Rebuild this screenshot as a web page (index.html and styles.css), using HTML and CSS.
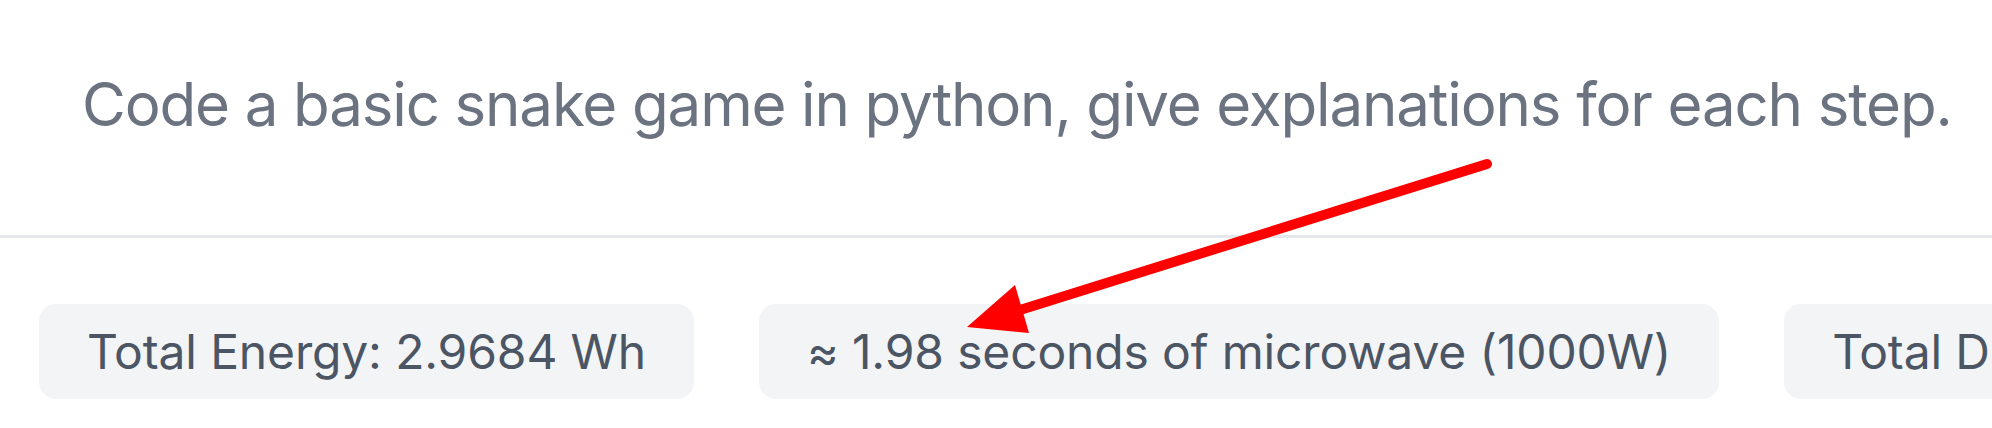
FILE: index.html
```html
<!DOCTYPE html>
<html lang="en">
<head>
<meta charset="utf-8">
<title>Prompt energy</title>
<link rel="stylesheet" href="styles.css">
</head>
<body>
<main class="page">
  <section class="prompt">
    <p class="prompt-text">Code a basic snake game in python, give explanations for each step.</p>
  </section>
  <hr class="divider">
  <section class="stats">
    <div class="badge">Total Energy: 2.9684 Wh</div>
    <div class="badge">≈ 1.98 seconds of microwave (1000W)</div>
    <div class="badge">Total Duration: 10.69 s</div>
  </section>
  <svg class="annotation" width="1992" height="428" viewBox="0 0 1992 428" aria-hidden="true">
    <line x1="1487" y1="164" x2="1020" y2="310" stroke="#ff0000" stroke-width="10" stroke-linecap="round"/>
    <polygon points="967,327 1015,285 1029,333" fill="#ff0000"/>
  </svg>
</main>
</body>
</html>
```

FILE: styles.css
```css
html, body {
  margin: 0;
  padding: 0;
  background: #ffffff;
}

.page {
  position: relative;
  width: 1992px;
  height: 428px;
  overflow: hidden;
  font-family: Inter, "Liberation Sans", sans-serif;
}

.prompt {
  padding: 62px 0 89px 82px;
}

.prompt-text {
  margin: 0;
  font-size: 60px;
  line-height: 84px;
  letter-spacing: -1.14px;
  color: #6b7280;
  white-space: nowrap;
}

.divider {
  margin: 0;
  border: 0;
  border-top: 3px solid #e5e7eb;
  height: 0;
}

.stats {
  display: flex;
  gap: 65px;
  padding: 66px 0 0 39px;
  white-space: nowrap;
}

.badge {
  flex: none;
  background: #f3f4f6;
  color: #4b5563;
  font-size: 48px;
  line-height: 71px;
  letter-spacing: -0.15px;
  padding: 12px 48px;
  border-radius: 17px;
}

.annotation {
  position: absolute;
  left: 0;
  top: 0;
  pointer-events: none;
}
```
